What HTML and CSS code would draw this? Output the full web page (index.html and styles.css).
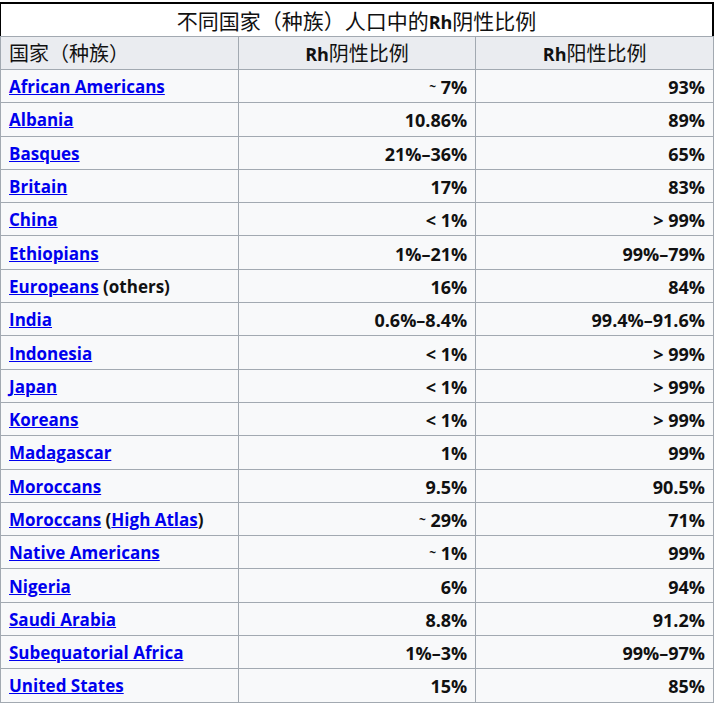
FILE: index.html
```html
<!DOCTYPE html>
<html lang="zh">
<head>
<meta charset="utf-8">
<link rel="stylesheet" href="styles.css">
</head>
<body>
<div class="page">
<table class="rh">
<caption><span class="cjk">不同国家（种族）人口中的</span><b>Rh</b><span class="cjk">阴性比例</span></caption>
<thead>
<tr><th class="left"><span class="cjk">国家（种族）</span></th><th><b>Rh</b><span class="cjk">阴性比例</span></th><th><b>Rh</b><span class="cjk">阳性比例</span></th></tr>
</thead>
<tbody>
<tr><td><a href="#">African Americans</a></td><td class="num"><span class="tilde">~</span> 7%</td><td class="num">93%</td></tr>
<tr><td><a href="#">Albania</a></td><td class="num">10.86%</td><td class="num">89%</td></tr>
<tr><td><a href="#">Basques</a></td><td class="num">21%–36%</td><td class="num">65%</td></tr>
<tr><td><a href="#">Britain</a></td><td class="num">17%</td><td class="num">83%</td></tr>
<tr><td><a href="#">China</a></td><td class="num">&lt; 1%</td><td class="num">&gt; 99%</td></tr>
<tr><td><a href="#">Ethiopians</a></td><td class="num">1%–21%</td><td class="num">99%–79%</td></tr>
<tr><td><a href="#">Europeans</a> (others)</td><td class="num">16%</td><td class="num">84%</td></tr>
<tr><td><a href="#">India</a></td><td class="num">0.6%–8.4%</td><td class="num">99.4%–91.6%</td></tr>
<tr><td><a href="#">Indonesia</a></td><td class="num">&lt; 1%</td><td class="num">&gt; 99%</td></tr>
<tr><td><a href="#">Japan</a></td><td class="num">&lt; 1%</td><td class="num">&gt; 99%</td></tr>
<tr><td><a href="#">Koreans</a></td><td class="num">&lt; 1%</td><td class="num">&gt; 99%</td></tr>
<tr><td><a href="#">Madagascar</a></td><td class="num">1%</td><td class="num">99%</td></tr>
<tr><td><a href="#">Moroccans</a></td><td class="num">9.5%</td><td class="num">90.5%</td></tr>
<tr><td><a href="#">Moroccans</a> (<a href="#">High Atlas</a>)</td><td class="num"><span class="tilde">~</span> 29%</td><td class="num">71%</td></tr>
<tr><td><a href="#">Native Americans</a></td><td class="num"><span class="tilde">~</span> 1%</td><td class="num">99%</td></tr>
<tr><td><a href="#">Nigeria</a></td><td class="num">6%</td><td class="num">94%</td></tr>
<tr><td><a href="#">Saudi Arabia</a></td><td class="num">8.8%</td><td class="num">91.2%</td></tr>
<tr><td><a href="#">Subequatorial Africa</a></td><td class="num">1%–3%</td><td class="num">99%–97%</td></tr>
<tr><td><a href="#">United States</a></td><td class="num">15%</td><td class="num">85%</td></tr>
</tbody>
</table>
</div>
</body>
</html>
```
FILE: styles.css
```css
html, body {
  margin: 0;
  padding: 0;
  background: #ffffff;
}
.page {
  padding-top: 2px;
}
.rh {
  width: 714px;
  border-collapse: collapse;
  table-layout: fixed;
  font-family: "Open Sans", "Noto Sans CJK SC", sans-serif;
  font-size: 17px;
  font-weight: bold;
  color: #111;
  background: #f8f9fa;
}
.cjk {
  font-family: "Noto Sans CJK SC", sans-serif;
  font-weight: normal;
  font-size: 20px;
}
.rh caption {
  background: #ffffff;
  border-top: 2px solid #000;
  border-left: 1px solid #000;
  border-right: 2px solid #000;
  height: 32px;
  line-height: 32px;
  text-align: center;
  font-size: 18px;
}
.rh caption .cjk {
  font-size: 21px;
}
.rh b {
  font-weight: bold;
}
.rh th {
  background: #eaecf0;
  border: 1px solid #a2a9b1;
  height: 32px;
  padding: 0 8px;
  text-align: center;
  font-weight: bold;
  font-size: 18px;
  line-height: 22px;
}
.rh th.left {
  text-align: left;
}
.rh td {
  border: 1px solid #a2a9b1;
  height: 30.3px;
  padding: 2px 8px 0;
  line-height: 22px;
}
.rh td.num {
  text-align: right;
  font-size: 18px;
}
.rh a {
  color: #0000ee;
  text-decoration: underline;
}
.tilde {
  font-size: 12px;
  vertical-align: 3px;
}
```
